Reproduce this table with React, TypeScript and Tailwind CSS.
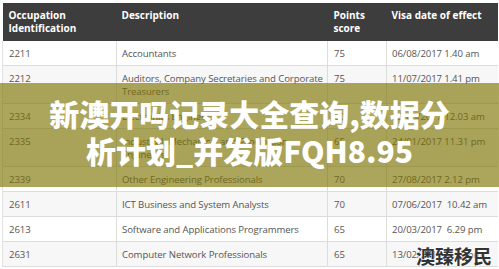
import React from 'react'

type Row = { code: string; desc: string; points: string; date: string }

const rows: Row[] = [
  { code: '2211', desc: 'Accountants', points: '75', date: '06/08/2017 1.40 am' },
  { code: '2212', desc: 'Auditors, Company Secretaries and Corporate Treasurers', points: '75', date: '11/07/2017 1.41 pm' },
  { code: '2334', desc: 'Electronics Engineers', points: '60', date: '23/08/2017 12.03 am' },
  { code: '2335', desc: 'Industrial, Mechanical and Production Engineers', points: '65', date: '24/01/2017 11.31 pm' },
  { code: '2339', desc: 'Other Engineering Professionals', points: '70', date: '27/08/2017 2.12 pm' },
  { code: '2611', desc: 'ICT Business and System Analysts', points: '70', date: '07/06/2017  10.42 am' },
  { code: '2613', desc: 'Software and Applications Programmers', points: '65', date: '20/03/2017  6.29 pm' },
  { code: '2631', desc: 'Computer Network Professionals', points: '65', date: '13/02/2017  4.15 pm' },
]

export default function App() {
  return (
    <div className="relative w-[499px] h-[269px] overflow-hidden bg-white font-['Open_Sans','Liberation_Sans',sans-serif]">
      {/* table */}
      <div className="pt-[3px] pl-[2px]">
        <table className="table-fixed border-collapse w-[495px] text-[10px] leading-[13px]">
          <colgroup>
            <col className="w-[114px]" />
            <col className="w-[211px]" />
            <col className="w-[59px]" />
            <col className="w-[111px]" />
          </colgroup>
          <thead>
            <tr className="bg-[#3d3d3d] text-white font-bold h-[38px]">
              <th className="text-left align-top px-[6px] pt-[6px] pb-[6px] font-bold">Occupation Identification</th>
              <th className="text-left align-top px-[5px] pt-[6px] pb-[6px] font-bold">Description</th>
              <th className="text-left align-top px-[6px] pt-[6px] pb-[6px] font-bold">Points score</th>
              <th className="text-left align-top px-[5px] pt-[6px] pb-[6px] font-bold">Visa date of effect</th>
            </tr>
          </thead>
          <tbody className="text-[#555] text-[9.6px] tracking-[-0.1px]">
            {rows.map((r, i) => (
              <tr key={r.code} className={`border-b border-[#dcdcdc] ${i % 2 === 1 ? 'bg-[#f7f7f7]' : 'bg-white'}`}>
                <td className="align-top px-[6px] pt-[6px] pb-[5px] border-l border-[#e2e2e2]">{r.code}</td>
                <td className="align-top pl-[5px] pr-[2px] pt-[6px] pb-[5px] border-l border-[#dcdcdc]">{r.desc}</td>
                <td className="align-top px-[6px] pt-[6px] pb-[5px] border-l border-[#dcdcdc]">{r.points}</td>
                <td className="align-top px-[5px] pt-[6px] pb-[5px] border-l border-[#dcdcdc] whitespace-pre">{r.date}</td>
              </tr>
            ))}
          </tbody>
        </table>
      </div>

      {/* olive banner with title */}
      <div className="absolute left-0 right-0 top-[83px] h-[104px] bg-[rgba(125,114,0,0.64)]" />
      <div className="absolute left-0 right-0 top-[95px] flex flex-col items-center text-white font-black text-[30px] leading-[37px] font-['Noto_Sans_CJK_SC','Noto_Sans',sans-serif]">
        <div>新澳开吗记录大全查询,数据分</div>
        <div>析计划_并发版FQH8.95</div>
      </div>

      {/* watermark */}
      <div className="absolute right-[7px] bottom-[2px] text-[19px] leading-[22px] font-bold text-[#333] font-['Noto_Sans_CJK_SC',sans-serif] [text-shadow:0_0_2px_#fff,0_0_2px_#fff]">
        澳臻移民
      </div>
    </div>
  )
}
